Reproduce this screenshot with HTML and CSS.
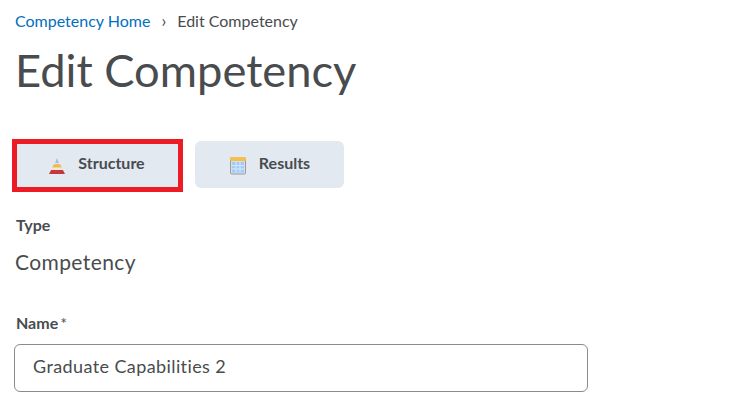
FILE: index.html
```html
<!DOCTYPE html>
<html lang="en">
<head>
  <meta charset="UTF-8" />
  <title>Edit Competency</title>
  <link rel="stylesheet" href="styles.css">
</head>
<body>
  <nav class="breadcrumb">
    <a href="#">Competency Home</a>
    <span class="crumb-sep">›</span>
    <span>Edit Competency</span>
  </nav>

  <h1>Edit Competency</h1>

  <div class="tabs">
    <button class="tab tab-marked" type="button">
      <svg class="tab-icon" width="18" height="16" viewBox="0 0 18 16">
        <path d="M9 0l1.800 5H7.200z" fill="#9dbcec"/>
        <path d="M6.900 6h4.200q2 .3 2.600 3.500H4.300q.6-3.200 2.600-3.500z" fill="#f0bd4c"/>
        <path d="M4 10h10l.8 2H3.200z" fill="#f5e6da"/>
        <path d="M3.100 12h11.800l2.100 4H1z" fill="#c4393d"/>
      </svg>
      Structure
    </button>
    <button class="tab tab-plain" type="button">
      <svg class="tab-icon" width="16" height="18" viewBox="0 0 16 18">
        <rect x="0.500" y="1" width="15" height="16" rx="1" fill="#d5dde6" stroke="#9b9b9b"/>
        <rect x="0" y="0" width="16" height="4" rx="1" fill="#f4bf4f"/>
        <rect x="2" y="5" width="12" height="10.500" fill="#a3cbfa"/>
        <path d="M6 5v10.500M10 5v10.500M2 8.500h12M2 12h12" stroke="#d8e8fb" stroke-width="1"/>
      </svg>
      Results
    </button>
  </div>

  <div class="field">
    <div class="field-label">Type</div>
    <div class="field-value">Competency</div>
  </div>

  <div class="field field-name">
    <label class="field-label" for="name">Name<span class="req">*</span></label>
    <input class="text-input" id="name" type="text" value="Graduate Capabilities 2" />
  </div>
</body>
</html>
```

FILE: styles.css
```css
/* General Styles */
body {
  font-family: 'Lato', 'Liberation Sans', sans-serif;
  background-color: #fff;
  margin: 0;
  padding: 0 0 0 15px;
  color: #494c4e;
  overflow: hidden;
}

/* Breadcrumb */
.breadcrumb {
  padding-top: 11px;
  font-size: 16px;
  line-height: 20px;
  display: flex;
  align-items: center;
}

.breadcrumb a {
  color: #006fbf;
  text-decoration: none;
}

.crumb-sep {
  margin: 0 11px;
  font-size: 17px;
}

h1 {
  margin: 9px 0 0 0;
  font-size: 45.300px;
  font-weight: 400;
  line-height: 60px;
}

/* Tabs */
.tabs {
  display: flex;
  align-items: flex-start;
  margin: 39px 0 0 -3px;
  gap: 12px;
}

.tab {
  display: flex;
  align-items: center;
  justify-content: center;
  background-color: #e3e9f1;
  color: #494c4e;
  font-family: inherit;
  font-size: 16px;
  font-weight: 700;
}

.tab-plain {
  width: 149px;
  height: 47px;
  margin-top: 2px;
  gap: 13px;
  border: none;
  border-radius: 6px;
  padding: 0 0 5px 1px;
}

.tab-marked {
  width: 171px;
  height: 53px;
  gap: 12px;
  border: 5px solid #ed1c24;
  border-radius: 0;
  padding: 0 2px 7px 0;
}

.tab-icon {
  margin-top: 8px;
}

/* Form */
.field {
  margin-top: 23px;
}

.field-label {
  display: block;
  font-size: 16px;
  font-weight: 700;
  line-height: 20px;
  margin-left: 1px;
}

.req {
  margin-left: 2px;
  font-weight: 400;
}

.field-value {
  margin-top: 14px;
  font-size: 21px;
  line-height: 26px;
  letter-spacing: 0.400px;
}

.field-name {
  margin-top: 38px;
}

.text-input {
  display: block;
  box-sizing: border-box;
  width: 574px;
  height: 48px;
  margin: 11px 0 0 -1px;
  padding: 0 18px 5px;
  border: 1px solid #868c92;
  border-radius: 6px;
  font-family: inherit;
  font-size: 18px;
  letter-spacing: 0.400px;
  color: #494c4e;
}
```
